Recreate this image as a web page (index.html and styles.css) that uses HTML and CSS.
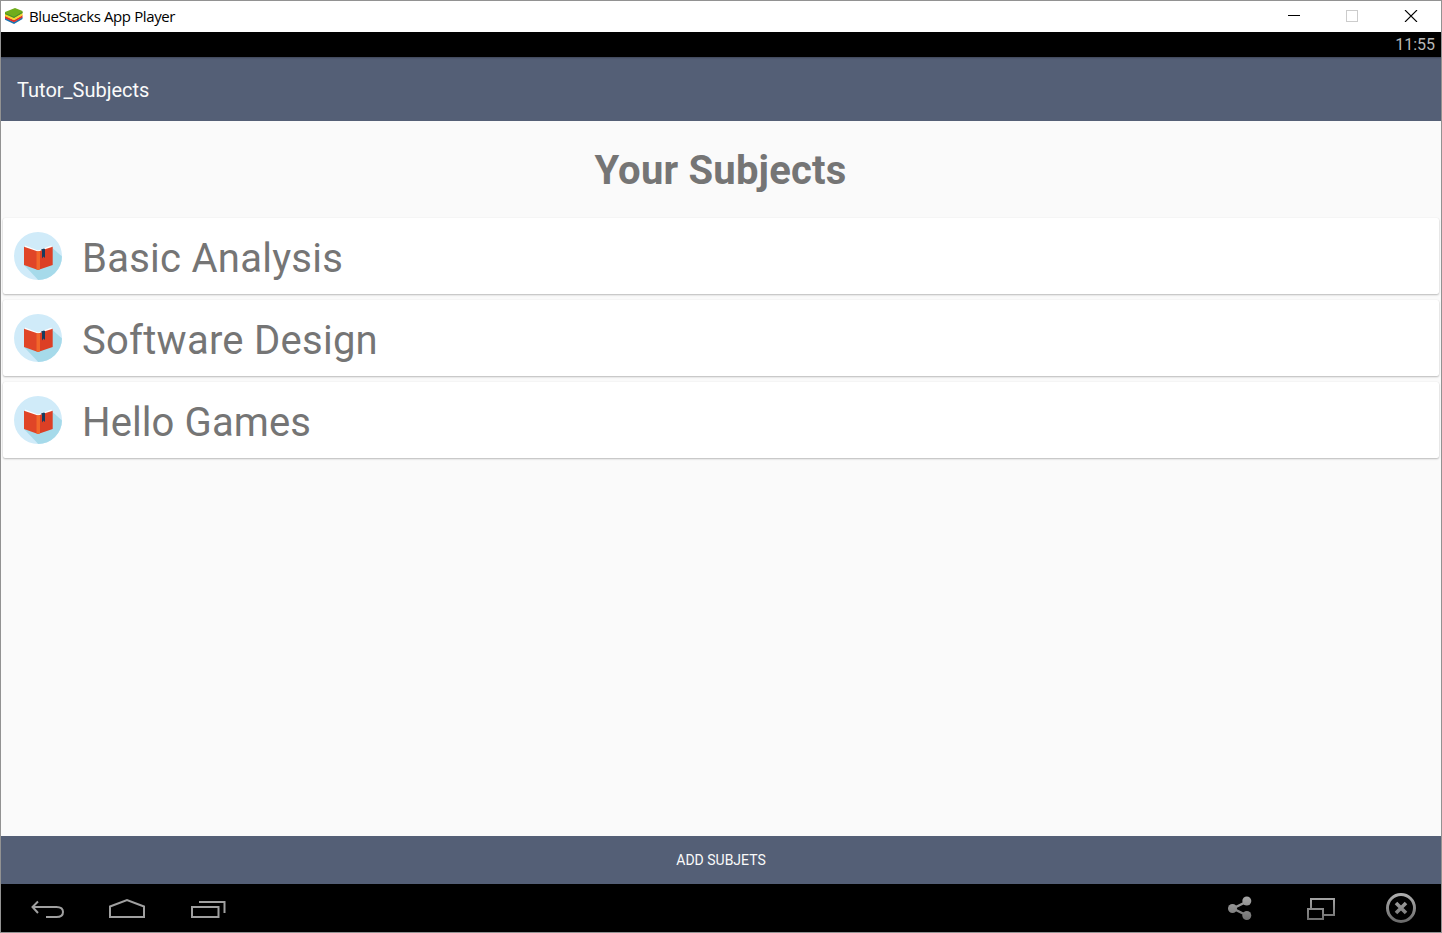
FILE: index.html
```html
<!DOCTYPE html>
<html lang="en">
<head>
<meta charset="utf-8">
<title>BlueStacks App Player</title>
<link rel="stylesheet" href="styles.css">
</head>
<body>
<svg class="defs" width="0" height="0" aria-hidden="true">
  <defs>
    <clipPath id="disc"><circle cx="24" cy="24" r="24"/></clipPath>
    <linearGradient id="metal" gradientUnits="userSpaceOnUse" x1="0" y1="0" x2="0" y2="30">
      <stop offset="0" stop-color="#b0b0b0"/><stop offset="1" stop-color="#686868"/>
    </linearGradient>
    <symbol id="book" viewBox="0 0 48 48">
      <g clip-path="url(#disc)">
        <rect width="48" height="48" fill="#d0ebf9"/>
        <path d="M10 33 38.500 16 54 30V54H30Z" fill="#a6daea"/>
      </g>
      <path d="M11 13.500 24 18.500 37.500 13.500V16L24 21 11 16Z" fill="#fff"/>
      <path d="M10 14.700 24 19.500V38L10 33Z" fill="#e04527"/>
      <path d="M24 19.500 38.700 14.700V33L24 38Z" fill="#dc3f25"/>
      <path d="M22.500 19 24 19.500 26 18.900V37.300L24 38 22.500 37.500Z" fill="#f2672a"/>
      <path d="M27 17.500 30 16.500 31 17V26L29.500 24.500 28 26.500V19Z" fill="#173b5e"/>
    </symbol>
  </defs>
</svg>
<div class="window">
  <header class="titlebar">
    <svg class="logo" width="20" height="18" viewBox="0 0 20 18">
      <path d="M1 10.500 10 15 18.500 10V12L10 17 1 12.800Z" fill="#1876b4"/>
      <path d="M1 8.500 10 13 18.500 8V10.600L10 15.200 1 11.200Z" fill="#df2f2b"/>
      <path d="M1 6.500 10 11 18.500 6V8.600L10 13.200 1 9.200Z" fill="#f8d32d"/>
      <path d="M1 5 11 1 18.500 4V6L10 11 1 7Z" fill="#70ad1c"/>
      <path d="M1 6 10 9.800 18.500 4.800V6L10 11 1 7Z" fill="#4b9125"/>
    </svg>
    <span class="window-name">BlueStacks App Player</span>
    <svg class="controls" width="130" height="12" viewBox="0 0 130 12" shape-rendering="crispEdges">
      <path d="M0 5.500H12" stroke="#000"/>
      <rect x="58.500" y=".5" width="11" height="11" fill="none" stroke="#ccc"/>
      <path d="M117 0 129 12M129 0 117 12" stroke="#000" stroke-width="1.100" shape-rendering="auto"/>
    </svg>
  </header>
  <div class="status"><span class="clock">11:55</span></div>
  <div class="appbar"><span class="screen-name">Tutor_Subjects</span></div>
  <main class="content">
    <h1 class="heading"><span class="heading-text">Your Subjects</span></h1>
    <ul class="subjects">
      <li class="card"><svg class="book" width="48" height="48"><use href="#book"/></svg><span class="subject">Basic Analysis</span></li>
      <li class="card"><svg class="book" width="48" height="48"><use href="#book"/></svg><span class="subject">Software Design</span></li>
      <li class="card"><svg class="book" width="48" height="48"><use href="#book"/></svg><span class="subject subject-tight">Hello Games</span></li>
    </ul>
  </main>
  <button class="add"><span class="add-text">ADD SUBJETS</span></button>
  <nav class="navbar">
    <svg width="200" height="24" viewBox="0 0 200 24" fill="none" stroke="#a0a0a0" stroke-width="2">
      <path d="M8 5.500 2.500 11 8 17M2.500 11H26.500Q33 11 33 16T26.500 21H16"/>
      <path d="M80 21V10.500L97 4 114 10.500V21Z"/>
      <path d="M162 11H188.500V21H162ZM169 6H194.500V17"/>
    </svg>
    <svg class="tools" width="190" height="30" viewBox="0 0 190 30" fill="none" stroke="url(#metal)">
      <g stroke-width="2.500"><path d="M19 8.500 5 15.500 19 22.500"/><g fill="url(#metal)" stroke="none"><circle cx="18.800" cy="8" r="4.500"/><circle cx="4.500" cy="15.500" r="4.500"/><circle cx="18.800" cy="22.500" r="4.500"/></g></g>
      <path d="M83 15V6H106V22H96M80 16H95V26H80Z" stroke-width="2"/>
      <circle cx="173" cy="15" r="13.500" stroke-width="3"/>
      <path d="M168 10 178 20M178 10 168 20" stroke-width="3.600"/>
    </svg>
  </nav>
</div>
</body>
</html>
```
FILE: styles.css
```css
* { box-sizing: border-box; }
body { margin: 0; font-family: Roboto, sans-serif; }
.defs { position: absolute; }
.window {
  width: 1442px;
  height: 933px;
  border: 1px solid #929292;
  display: flex;
  flex-direction: column;
  background: #fafafa;
}
.titlebar {
  height: 31px;
  display: flex;
  align-items: center;
  padding: 0 23px 0 3px;
  background: #fff;
}
.logo { margin: 0 5px 1px 0; }
.controls { margin-bottom: 1px; }
.window-name {
  flex: 1;
  padding-bottom: 2px;
  font: 15px "Open Sans", sans-serif;
  letter-spacing: -0.38px;
  color: #000;
}
.status {
  height: 25px;
  padding-right: 6px;
  text-align: right;
  font-size: 16px;
  line-height: 25px;
  color: #b8b8b8;
  background: #000;
}
.appbar {
  height: 64px;
  padding-left: 16px;
  font-size: 20px;
  line-height: 66px;
  color: #fafafa;
  background: #545f76;
  box-shadow: inset 0 2px 2px -1px #3d4558;
}
.content { flex: 1; }
.heading {
  margin: 0;
  height: 97px;
  padding-right: 1px;
  text-align: center;
  font-size: 40px;
  line-height: 100px;
  font-weight: 700;
  letter-spacing: 0.2px;
  color: #757575;
}
.subjects {
  list-style: none;
  margin: 0;
  padding: 0 2px;
  display: grid;
  gap: 6px;
}
.card {
  height: 76px;
  display: flex;
  align-items: center;
  padding: 0 11px;
  gap: 20px;
  background: #fff;
  border-radius: 2px;
  box-shadow: 0 1px 2px rgba(0, 0, 0, .26), 0 0 1px rgba(0, 0, 0, .08);
}
.subject {
  font-size: 40px;
  line-height: 47px;
  letter-spacing: 0.26px;
  color: #757575;
  padding-top: 4px;
}
.subject-tight { letter-spacing: 0.1px; }
.add {
  height: 48px;
  border: 0;
  padding: 0;
  font: 14px Roboto, sans-serif;
  color: #fafafa;
  background: #545f76;
}
.navbar {
  height: 48px;
  display: flex;
  align-items: center;
  justify-content: space-between;
  padding: 0 25px 0 29px;
  background: #000;
}
.tools { margin-right: -2px; }
```
